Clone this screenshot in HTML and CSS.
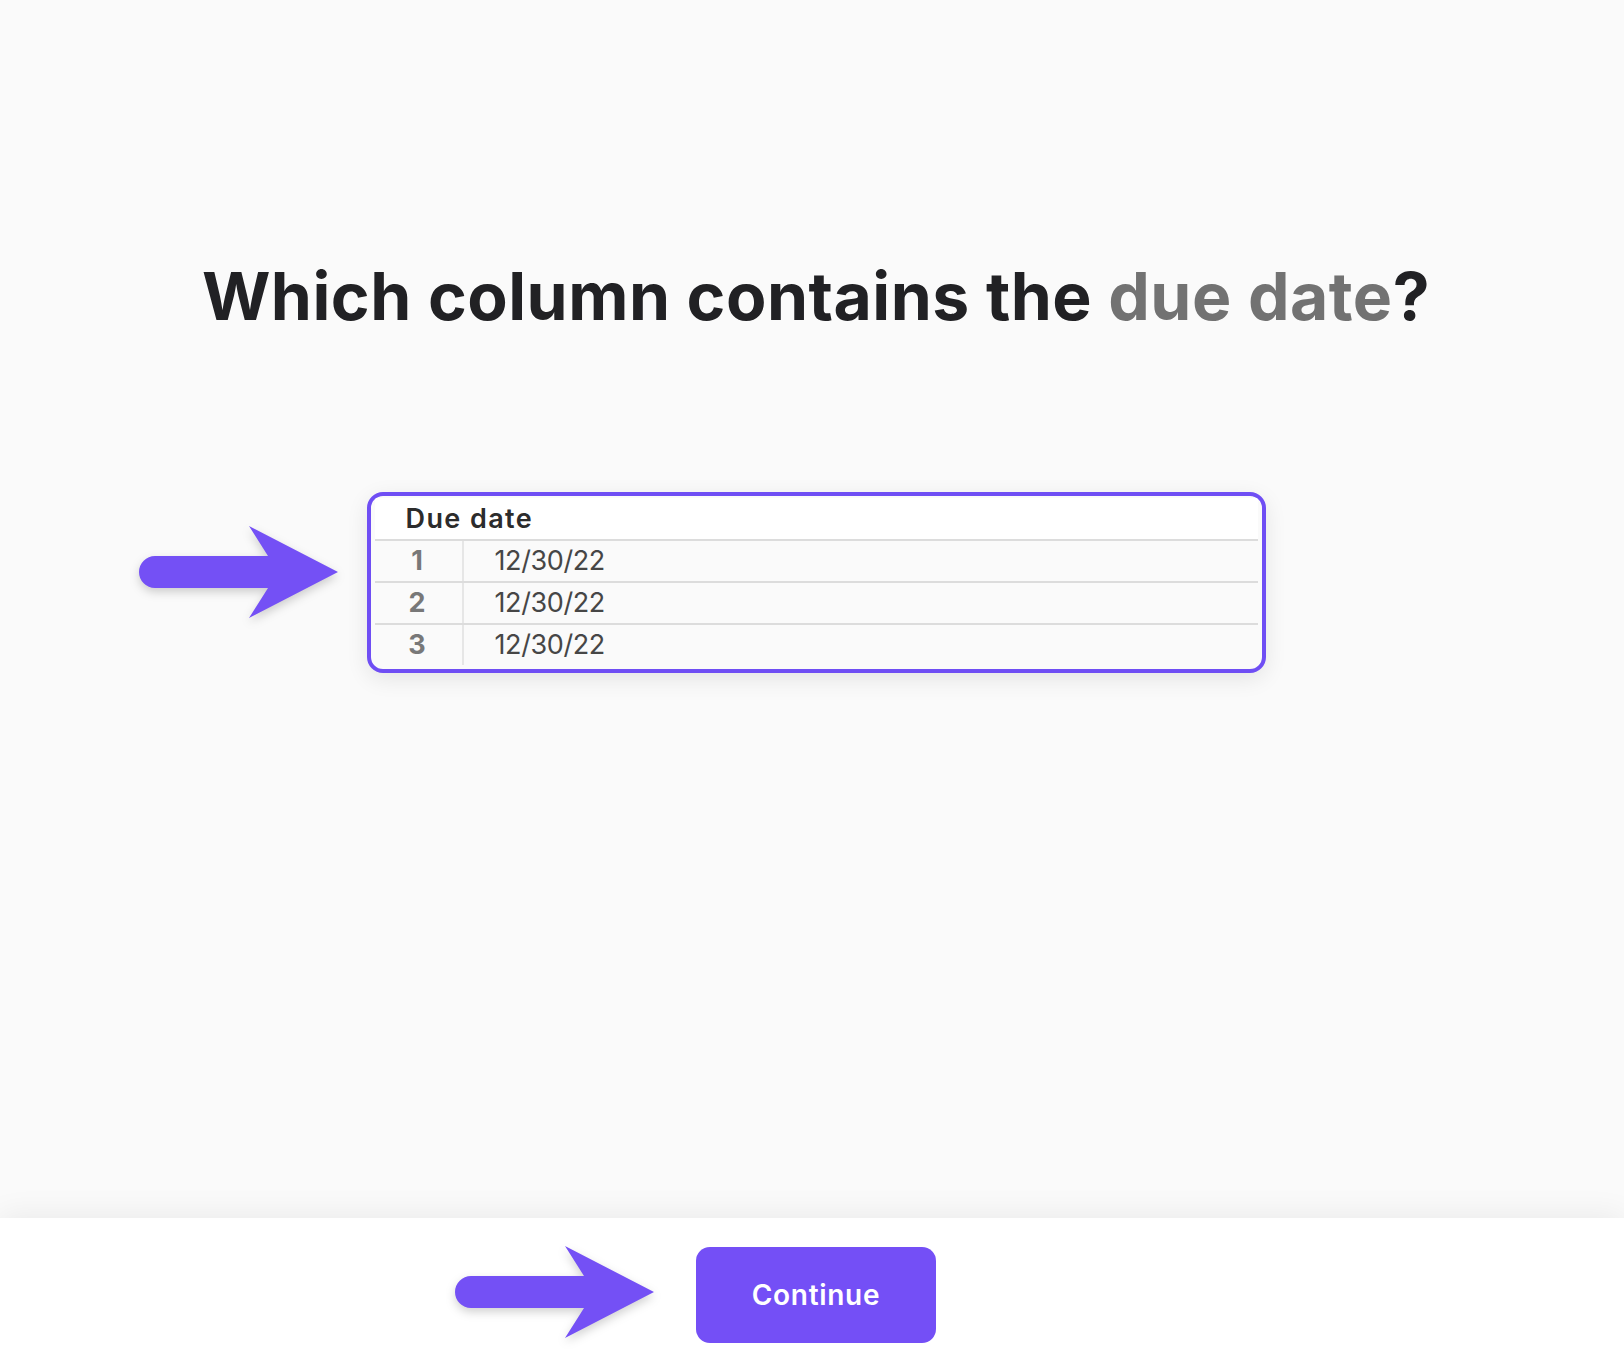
FILE: index.html
```html
<!DOCTYPE html>
<html lang="en">
<head>
<meta charset="utf-8">
<title>Which column contains the due date?</title>
<link rel="stylesheet" href="styles.css">
</head>
<body>
<div class="page">
  <main class="main">
    <h1 class="question">Which column contains the <span class="hl">due date</span>?</h1>
    <div class="card-wrap">
      <svg class="arrow arrow-card" viewBox="0 0 199 92" width="199" height="92" aria-hidden="true">
        <path d="M16,30 H129 L110,0 L199,46 L110,92 L129,62 H16 A16,16 0 0 1 16,30 Z"/>
      </svg>
      <div class="card">
        <div class="col-head">Due date</div>
        <div class="row"><div class="num">1</div><div class="val">12/30/22</div></div>
        <div class="row"><div class="num">2</div><div class="val">12/30/22</div></div>
        <div class="row"><div class="num">3</div><div class="val">12/30/22</div></div>
      </div>
    </div>
  </main>
  <footer class="footer">
    <div class="btn-wrap">
      <svg class="arrow arrow-btn" viewBox="0 0 199 92" width="199" height="92" aria-hidden="true">
        <path d="M16,30 H129 L110,0 L199,46 L110,92 L129,62 H16 A16,16 0 0 1 16,30 Z"/>
      </svg>
      <button class="continue" type="button">Continue</button>
    </div>
  </footer>
</div>
</body>
</html>
```

FILE: styles.css
```css
* { box-sizing: border-box; }
html, body { margin: 0; padding: 0; }
body {
  background: #fafafa;
  font-family: Inter, "Noto Sans", "DejaVu Sans", sans-serif;
  color: #222225;
}
.page {
  display: flex;
  flex-direction: column;
  height: 1372px;
}
.main {
  flex: 1;
  display: flex;
  flex-direction: column;
  align-items: center;
  padding-left: 8px;
}
.question {
  margin: 256px 0 0;
  font-size: 66px;
  line-height: 80px;
  font-weight: 700;
  letter-spacing: 0.5px;
  color: #212124;
  white-space: nowrap;
}
.question .hl { color: #727272; }

.card-wrap {
  position: relative;
  margin-top: 156px;
}
.arrow { position: absolute; fill: #7450f5; filter: drop-shadow(0 4px 5px rgba(0,0,0,0.18)); }
.arrow-card { left: -228px; top: 34px; }

.card {
  width: 899px;
  border: 4px solid #6f4ef4;
  border-radius: 16px;
  background: #fafafa;
  padding: 2px 4px 4px;
  box-shadow: 0 6px 22px rgba(0,0,0,0.09);
  overflow: hidden;
}
.col-head {
  height: 43px;
  background: #fff;
  border-bottom: 2px solid #dcdcdc;
  padding: 1px 0 0 31px;
  font-size: 27px;
  line-height: 40px;
  font-weight: 600;
  letter-spacing: 1.4px;
  color: #2c2c2c;
}
.row {
  display: flex;
  height: 42px;
  border-bottom: 2px solid #dcdcdc;
  font-size: 27px;
  line-height: 40px;
}
.row:last-child { border-bottom: 0; height: 40px; }
.num {
  width: 89px;
  text-align: center;
  font-weight: 700;
  color: #787878;
  border-right: 2px solid #e6e6e6;
  padding-right: 2px;
}
.val {
  padding-left: 31px;
  font-weight: 400;
  letter-spacing: -0.4px;
  color: #464646;
}

.footer {
  height: 154px;
  background: #fff;
  box-shadow: 0 -2px 30px rgba(0,0,0,0.07);
  display: flex;
  justify-content: center;
  align-items: center;
  padding-left: 8px;
}
.btn-wrap { position: relative; }
.arrow-btn { left: -241px; top: -1px; }
.continue {
  display: block;
  width: 240px;
  height: 96px;
  border: 0;
  border-radius: 14px;
  background: #744ff6;
  color: #fff;
  font-family: Inter, "Noto Sans", sans-serif;
  font-size: 28px;
  font-weight: 600;
  letter-spacing: 0.7px;
}
```
